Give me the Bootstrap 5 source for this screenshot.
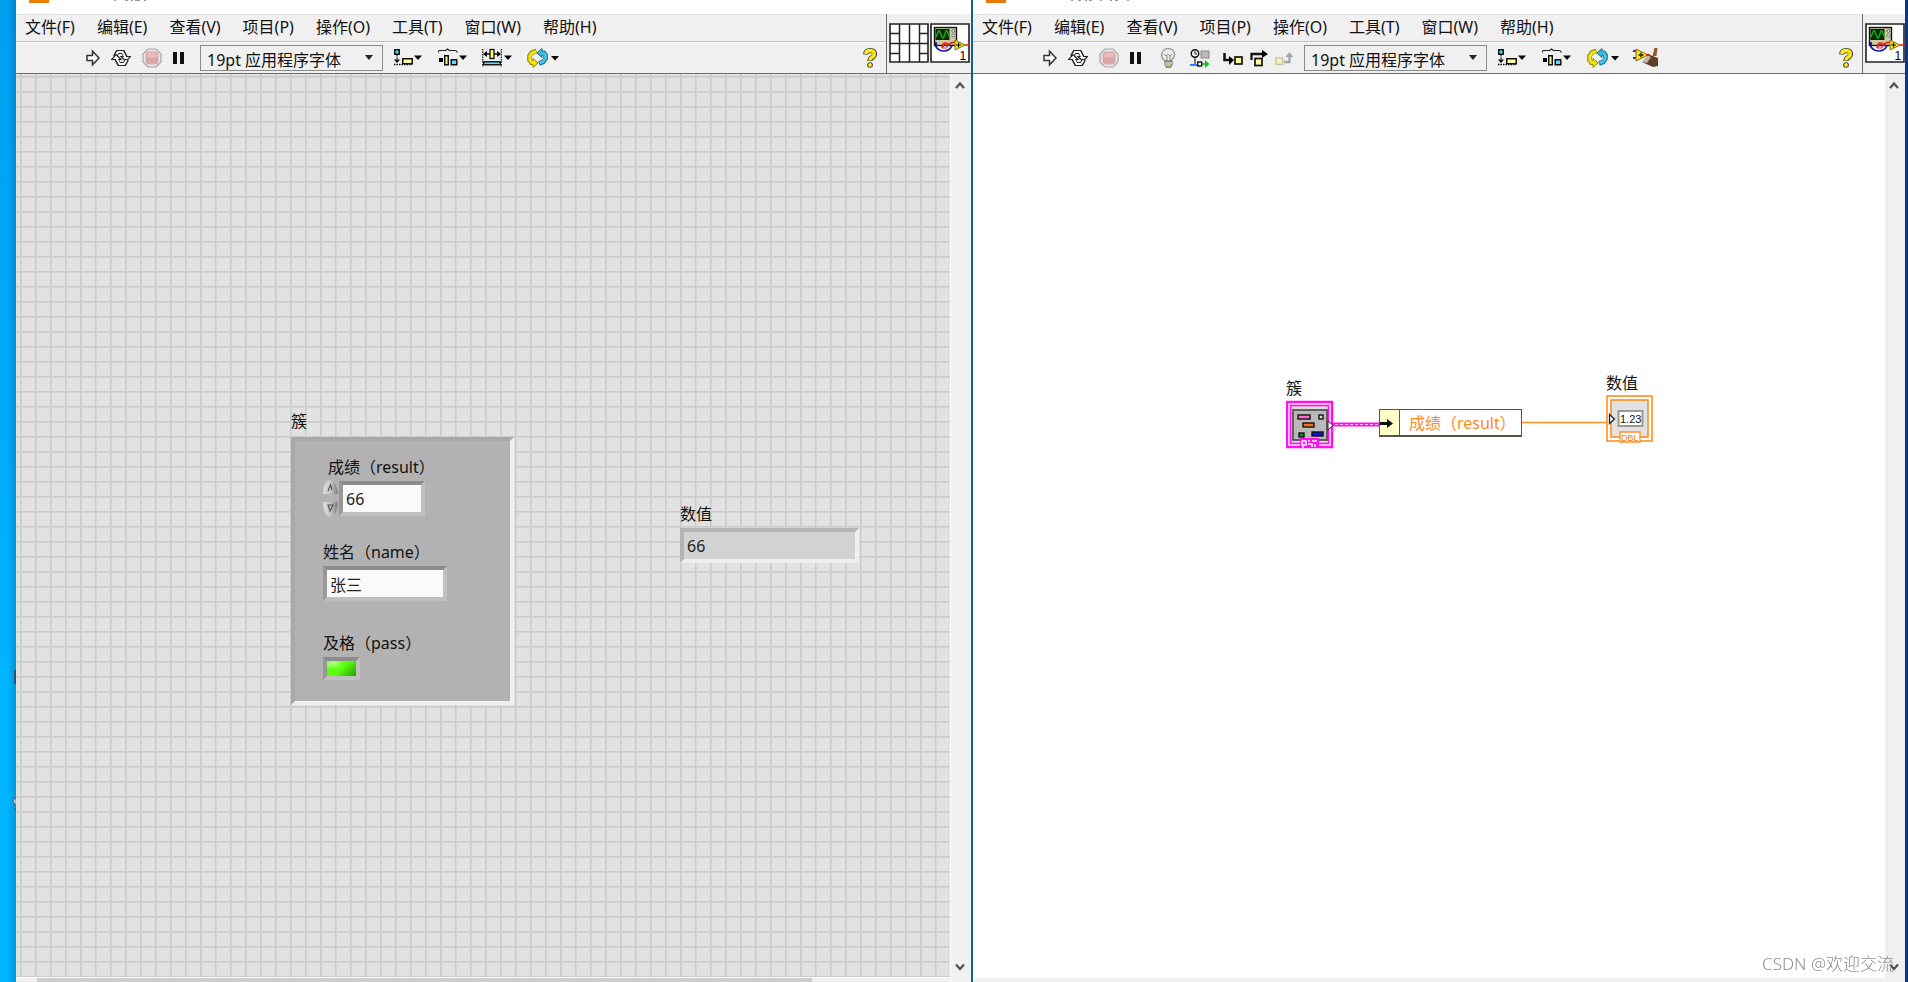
<!DOCTYPE html>
<html lang="zh-CN">
<head>
<meta charset="utf-8">
<meta name="viewport" content="width=device-width, initial-scale=1">
<title>簇 - 前面板与程序框图</title>
<link rel="stylesheet" href="https://cdn.jsdelivr.net/npm/bootstrap@5.3.0/dist/css/bootstrap.min.css">
<style>
  body { font-family: "Noto Sans", "Noto Sans CJK SC", sans-serif; font-size: 16px; line-height: 20px; color: #111; background: #fff; }
  .desktop { display: grid; grid-template-columns: 16px minmax(0, 957fr) minmax(0, 932fr) 3px; height: 100vh; }
  .wallpaper { background: linear-gradient(90deg, transparent 8px, rgba(0, 60, 100, .25)), linear-gradient(#009ff0, #00b4ff 70%); }
  .edge-left { border-right: 2px solid #0f6095; }
  .edge-right { background: #003a94; }
  .title-strip { height: 14px; padding-left: 13px; gap: 64px; background: #fff; }
  .chrome { background: #f0f0f0; border-bottom: 1px solid #6c6c6c; height: 60px; }
  .menu-bar { height: 28px; gap: 22px; padding-left: 9px; border-top: 1px solid #e0e0e0; border-bottom: 1px solid #bdbdbd; }
  .menu-bar a { color: #111; text-decoration: none; white-space: nowrap; line-height: 24px; }
  .tool-bar { height: 31px; gap: 11px; padding: 0 9px 0 70px; border-top: 1px solid #fff; }
  .tool-bar button, .palette button, .scroll-y button { border: 0; padding: 0; background: none; display: block; line-height: 0; }
  .steps { gap: 7px; }
  .font-box select { width: 183px; height: 26px; padding: 3px 24px 0 6px; border: 1px solid #8a8a8a; border-radius: 0; background: #f0f0f0; color: #111; font-size: 16px; line-height: 22px; appearance: none; }
  .font-box svg { position: absolute; right: 10px; top: 10px; pointer-events: none; }
  .palette { gap: 1px; padding: 9px 1px 0 2px; border-left: 1px solid #6c6c6c; }
  .palette-single { padding-right: 0; }
  .scroll-y { width: 21px; background: #f0f0f0; border-left: 1px solid #fff; padding: 6px 0 10px; }
  .scroll-x { height: 5px; background: #f0f0f0; border-top: 1px solid #fff; }
  .scroll-x div { height: 4px; margin-left: 21px; width: 83%; background: #cdcdcd; }
  .panel { background-color: #e2e2e2; overflow: hidden;
    background-image: linear-gradient(90deg, #cacaca 1px, #d4d4d4 1px 2px, transparent 2px), linear-gradient(#cacaca 1px, #d4d4d4 1px 2px, transparent 2px);
    background-size: 15px 15px; background-position: 4px 2px; }
  .diagram { background: #fff; overflow: hidden; }
  .item { position: absolute; }
  .item-label { display: block; white-space: nowrap; line-height: 20px; }
  .bevel { border: 4px solid; border-color: #8c8c8c #c0c0c0 #c0c0c0 #989898; }
  .bevel-pale { border: 4px solid; border-color: #b3b3b3 #efefef #efefef #b3b3b3; }
  .field { display: block; height: 35px; padding: 0 3px; border-radius: 0; background: #fafafa; color: #222; line-height: 24px; }
  .cluster-box { width: 223px; height: 268px; margin-top: 6px; padding: 16px 0 0 28px; background: #b2b2b2; border-color: #a8a8a8 #efefef #efefef #a8a8a8; }
  .score-label { margin-left: 5px; }
  .score-row { gap: 1px; margin: 2px 0 24px; }
  .pass-label { margin-top: 32px; }
  .field-score { width: 86px; }
  .field-name { width: 124px; }
  .field-value { width: 179px; background: #d2d2d2; }
  .led { display: block; width: 37px; height: 23px; padding: 0; background: radial-gradient(ellipse at 20% 15%, #b8ff90, transparent 35%), linear-gradient(135deg, #5cff10 50%, #2b9a00); }
  .wm { position: fixed; right: 14px; bottom: 8px; font-size: 17px; font-weight: 300; color: #8f8f8f; }
  .unbundle { display: flex; height: 28px; border: 1px solid #55554a; border-bottom-width: 2px; background: #fff; }
  .unbundle span { padding-left: 9px; width: 121px; color: #ff8a1c; line-height: 26px; white-space: nowrap; }
  .unbundle svg { background: #ffffcc; border-right: 1px solid #55554a; }
  svg text { font-family: "Liberation Sans", sans-serif; }
</style>
</head>
<body class="overflow-hidden">

<svg width="0" height="0" class="position-absolute" aria-hidden="true">
  <defs>
    <symbol id="i-run" viewBox="0 0 14 20"><path d="M1 7.500h5.500V3.200L13 10l-6.500 6.800v-4.300H1z" fill="#fff" stroke="#333" stroke-width="1.500"/></symbol>
    <symbol id="i-loop" viewBox="0 0 20 20">
      <g id="half-loop"><path d="M4 8.500L6.500 4H12l2.500 5" fill="none" stroke="#222" stroke-width="4.200"/><path d="M10 8.500h9.500L15 13.500z" fill="#fff" stroke="#222" stroke-width="1.200"/><path d="M4.500 7.800L7 4h4.500l2.800 5.200" fill="none" stroke="#fff" stroke-width="2"/></g>
      <use href="#half-loop" transform="rotate(180 10 10)"/>
    </symbol>
    <symbol id="i-stop" viewBox="0 0 20 20"><path d="M6 1h8l5 5v8l-5 5H6l-5-5V6z" fill="#e8e6e6" stroke="#a5a5a5" stroke-width="1.200"/><rect x="3.500" y="3.500" width="13" height="13" rx="4" fill="#d9a5a5"/><rect x="5" y="4.500" width="10" height="5" rx="2.500" fill="#e8bcbc"/></symbol>
    <symbol id="i-pause" viewBox="0 0 12 20"><path d="M0 4h4v12H0zM7 4h4v12H7z" fill="#111"/></symbol>
    <symbol id="i-align" viewBox="0 0 33 20"><rect x=".75" y="1.750" width="4.500" height="4.500" fill="#60d8ff" stroke="#111" stroke-width="1.500"/><path d="M3 7v6M0 16.500h18" stroke="#111" stroke-width="1.300" fill="none" stroke-dasharray="1.500 1"/><path d="M0 11.500h6L3 15z"/><rect x="8.750" y="10.750" width="9.500" height="5" fill="#ffffa0" stroke="#111" stroke-width="1.500"/><path d="M20 7.500h8l-4 4.500z"/></symbol>
    <symbol id="i-dist" viewBox="0 0 33 20"><path d="M0 4.500q0-2 2-2h5.500l2-1.500 2 1.500H17q2 0 2 2" fill="none" stroke="#222" stroke-width="1.200"/><path d="M1 10h4v4H1z"/><rect x="6.750" y="7.750" width="3.500" height="9" fill="#ffffa0" stroke="#111" stroke-width="1.500"/><rect x="13.250" y="11.750" width="5.500" height="5" fill="#60d8ff" stroke="#111" stroke-width="1.500"/><path d="M21 7.500h8l-4 4.500z"/></symbol>
    <symbol id="i-resize" viewBox="0 0 33 20"><path d="M.75 1v18M19.300 1v18" stroke="#111" stroke-width="1.200" stroke-dasharray="1.500 1"/><path d="M2 6h6M12 6h6" stroke="#111" stroke-width="1.500"/><path d="M1 6l4-3v6zM19 6l-4-3v6z"/><rect x="8" y="1.500" width="4" height="9" fill="#ffff70" stroke="#111" stroke-width="1.300"/><rect x="1.750" y="13.750" width="16.500" height="3" fill="#60d8ff" stroke="#111" stroke-width="1.400"/><path d="M22 7.500h8l-4 4.500z"/></symbol>
    <symbol id="i-order" viewBox="0 0 33 20">
      <path d="M10.500 3L6 4.500 3.500 8v4L6 14.500" fill="none" stroke="#8f8700" stroke-width="4.600"/><path d="M7 10.500l5 4.500-5 4.500v-3H4V13h3z" fill="#f4e30c" stroke="#8f8700"/><path d="M10 3.300L6.200 4.800 3.800 8v4l2.400 2.500" fill="none" stroke="#f4e30c" stroke-width="3"/>
      <path d="M13 15.500l4-1.500 2.500-3.500V7L17 4.500" fill="none" stroke="#14718d" stroke-width="4.600"/><path d="M16 .5L11 5l5 4.500v-3h3V3h-3z" fill="#38b8dc" stroke="#14718d"/><path d="M13.500 15.200l3.300-1.400 2.400-3.300V7l-2.400-2.300" fill="none" stroke="#45c4e6" stroke-width="3"/>
      <path d="M25 8h8l-4 4.500z"/>
    </symbol>
    <symbol id="i-bulb" viewBox="0 0 24 20"><path d="M11.500 12.500q-4-3-2.500-7.500Q11 .4 15 .4q5.500.3 6.500 5.400.2 3.500-3.500 6.700v2h-5z" fill="#eee" stroke="#999" stroke-width="1.300"/><path d="M11 6l2 2 2-2 2 2 2-2M14 8v6M17 8v6" fill="none" stroke="#888"/><path d="M12 13h7v4l-2 3h-3l-2-3z" fill="#b5a565" stroke="#666"/><path d="M12 15h7M12 17h6" stroke="#ddd"/></symbol>
    <symbol id="i-retain" viewBox="0 0 22 20"><circle cx="7" cy="5.500" r="3.700" fill="#fff" stroke="#111" stroke-width="1.500"/><path d="M7 3v3h2M7 9v7" fill="none" stroke="#111"/><rect x="13" y="3" width="8" height="7" fill="#bbb" stroke="#888"/><path d="M2 17h8" stroke="#0050ff" stroke-width="1.500"/><rect x="9.700" y="14" width="4" height="4" fill="#fff" stroke="#111" stroke-width="1.400"/><path d="M14 16h4" stroke="#0a0" stroke-width="1.500"/><path d="M17 12l4.500 4-4.500 4z" fill="#10c010"/></symbol>
    <symbol id="i-into" viewBox="0 0 22 20"><path d="M3.500 5v7H9" fill="none" stroke="#111" stroke-width="2.500"/><path d="M8 8l5 4-5 5z"/><rect x="14" y="9" width="7" height="7" fill="#ffffa0" stroke="#111" stroke-width="1.700"/></symbol>
    <symbol id="i-over" viewBox="0 0 18 20"><path d="M1.500 12V6H13" fill="none" stroke="#111" stroke-width="2.300"/><path d="M12 2l6 4-6 4z"/><rect x="5" y="10.500" width="7" height="7" fill="#ffffa0" stroke="#111" stroke-width="1.700"/></symbol>
    <symbol id="i-out" viewBox="0 0 18 20"><rect x="1" y="10" width="6.500" height="6.500" fill="#f5f5bd" stroke="#c6c6a0" stroke-width="1.500"/><path d="M9 14h5.500V7" fill="none" stroke="#a5a5a5" stroke-width="2.300"/><path d="M10.500 9l4-5 4 5z" fill="#a5a5a5"/></symbol>
    <symbol id="i-clean" viewBox="0 0 30 20"><path d="M3 3h4M3 10h4" stroke="#2030d0" stroke-width="1.800"/><path d="M6 1l12 6-12 6z" fill="#f7e71c" stroke="#8a6b00"/><path d="M8.500 7h5M11 4.500v5" stroke="#222" stroke-width="1.300"/><path d="M16 7h4" stroke="#e02010" stroke-width="2"/><path d="M24.500 0h3l-1 8h-4z" fill="#8e5b25"/><path d="M20 7l8 3v8l-5 1-11-5 6-3z" fill="#5d3f2a"/><path d="M12 14l5-6 4 1-4 6z" fill="#c3b49e"/></symbol>
    <symbol id="i-help" viewBox="0 0 14 20"><path d="M2.500 6.500Q3 2.500 7 2.500q4.500.2 4.500 3.500 0 2-2.500 3.500-2 1-2 3.500" fill="none" stroke="#333" stroke-width="5"/><circle cx="7" cy="17" r="2.800" fill="#333"/><path d="M2.700 6Q3 2.500 7 2.500q4.300.2 4.300 3.500 0 2-2.300 3.300-2 1.200-2 3.200" fill="none" stroke="#ffee10" stroke-width="3.400"/><circle cx="7" cy="17" r="1.900" fill="#ffee10"/></symbol>
    <symbol id="i-pane" viewBox="0 0 40 40"><path d="M1 1h38v38H1z" fill="#fff" stroke="#222" stroke-width="1.600"/><path d="M10.500 1v38M20.500 1v38M30.500 1v38M1 20.500h38M1 10.500h9.500M1 30.500h9.500M30.500 10.500H39M30.500 30.500H39" stroke="#222" stroke-width="1.500"/></symbol>
    <symbol id="i-vi" viewBox="0 0 40 40"><path d="M1 1h38v38H1z" fill="#fff" stroke="#222" stroke-width="1.600"/><rect x="4.500" y="4.500" width="22" height="18" fill="#cfcaa2" stroke="#111" stroke-width="1.400"/><rect x="5.500" y="6" width="14" height="11" fill="#052a08"/><path d="M6 14l2.500-6h1l3 7h1L16 8h1l2.500 6" fill="none" stroke="#18b018" stroke-width="1.400"/><circle cx="23.300" cy="8" r="1.400" fill="#fff" stroke="#666"/><circle cx="23.300" cy="12.500" r="1.400" fill="#fff" stroke="#666"/><path d="M6 19v5q3 4 8 4t8-5" fill="none" stroke="#1818a8" stroke-width="1.600"/><path d="M6 20v4" stroke="#1818a8" stroke-width="2"/><path d="M12 25l3-5 3 2q3-3 8-3h1M35 22h5" fill="none" stroke="#e82020" stroke-width="1.500"/><path d="M13 20h5l-1 5h-5z" fill="none" stroke="#e82020"/><path d="M25 17l10 5-10 5z" fill="#ffe820" stroke="#857400"/><path d="M26 22h5M28.500 19.500v5" stroke="#111" stroke-width="1.200"/><text x="29.500" y="36.500" font-size="12">1</text></symbol>
    <symbol id="i-up" viewBox="0 0 20 20"><path d="M5 13l4-4.500 4 4.500" fill="none" stroke="#555" stroke-width="2.400"/></symbol>
    <symbol id="i-down" viewBox="0 0 20 20"><path d="M5 7.500l4 4.500 4-4.500" fill="none" stroke="#555" stroke-width="2.400"/></symbol>
  </defs>
</svg>

<div class="desktop">
  <div class="wallpaper position-relative">
    <svg class="position-absolute end-0" style="top:68.200%" width="4" height="142" aria-hidden="true"><path d="M2 0h2v14H2z" fill="#165a80"/><path d="M3 128q-3 3 0 7h1v-7zM2 139h2" fill="#fff" stroke="#456" stroke-width="1"/></svg>
  </div>

  <!-- 前面板 -->
  <section class="edge-left d-flex flex-column">
    <div class="title-strip d-flex">
      <svg width="20" height="3" aria-hidden="true"><path d="M0 0h20v3H0z" fill="#ec7a08"/></svg>
      <svg width="36" height="2" aria-hidden="true"><path d="M1 .5h2M12 .5h3M18 .5h2M22 .5h5M31 .5h2" stroke="#999"/></svg>
    </div>
    <header class="chrome d-flex">
      <div class="flex-grow-1">
        <nav class="menu-bar d-flex"><a href="#">文件(F)</a><a href="#">编辑(E)</a><a href="#">查看(V)</a><a href="#">项目(P)</a><a href="#">操作(O)</a><a href="#">工具(T)</a><a href="#">窗口(W)</a><a href="#">帮助(H)</a></nav>
        <div class="tool-bar d-flex align-items-center">
          <button type="button" aria-label="运行"><svg width="14" height="20"><use href="#i-run"/></svg></button>
          <button type="button" aria-label="连续运行"><svg width="20" height="20"><use href="#i-loop"/></svg></button>
          <button type="button" aria-label="中止"><svg width="20" height="20"><use href="#i-stop"/></svg></button>
          <button type="button" aria-label="暂停"><svg width="12" height="20"><use href="#i-pause"/></svg></button>
          <div class="font-box position-relative ms-1"><select aria-label="字体"><option>19pt 应用程序字体</option></select><svg width="8" height="5" aria-hidden="true"><path d="M0 0h8L4 5z" fill="#222"/></svg></div>
          <button type="button" aria-label="对齐对象"><svg width="33" height="20"><use href="#i-align"/></svg></button>
          <button type="button" aria-label="分布对象"><svg width="33" height="20"><use href="#i-dist"/></svg></button>
          <button type="button" aria-label="调整大小"><svg width="33" height="20"><use href="#i-resize"/></svg></button>
          <button type="button" aria-label="重新排序"><svg width="33" height="20"><use href="#i-order"/></svg></button>
          <button type="button" class="ms-auto" aria-label="即时帮助"><svg width="14" height="20"><use href="#i-help"/></svg></button>
        </div>
      </div>
      <div class="palette d-flex align-items-start">
        <button type="button" aria-label="连线板"><svg width="40" height="40"><use href="#i-pane"/></svg></button>
        <button type="button" aria-label="VI 图标"><svg width="40" height="40"><use href="#i-vi"/></svg></button>
      </div>
    </header>
    <div class="flex-grow-1 d-flex">
      <div class="flex-grow-1 d-flex flex-column">
        <main class="panel flex-grow-1 position-relative">
          <div class="item" style="left:275px;top:337px">
            <span class="item-label">簇</span>
            <div class="cluster-box bevel-pale">
              <label class="item-label score-label" for="score">成绩（result）</label>
              <div class="score-row d-flex align-items-center">
                <svg width="15" height="39" role="img" aria-label="增减">
                  <defs><linearGradient id="knob"><stop offset="0" stop-color="#e4e4e4"/><stop offset=".6" stop-color="#bbb"/><stop offset="1" stop-color="#777"/></linearGradient></defs>
                  <path d="M0 15Q1 1 7 1t8 14z" fill="url(#knob)"/><path d="M0 23h15q-1 14-8 15Q1 37 0 23z" fill="url(#knob)"/>
                  <path d="M5 12l2.500-6L9 11M5 26h5l-3 6z" fill="none" stroke="#555" stroke-width="1.200"/>
                </svg>
                <input class="field field-score bevel" id="score" type="text" value="66">
              </div>
              <label class="item-label" for="pname">姓名（name）</label>
              <input class="field field-name bevel mt-1" id="pname" type="text" value="张三">
              <label class="item-label pass-label" for="pass">及格（pass）</label>
              <button class="led bevel mt-1" id="pass" type="button"></button>
            </div>
          </div>
          <div class="item" style="left:664px;top:430px">
            <label class="item-label" for="val">数值</label>
            <input class="field field-value bevel-pale mt-1" id="val" type="text" value="66" readonly>
          </div>
        </main>
        <div class="scroll-x"><div></div></div>
      </div>
      <div class="scroll-y d-flex flex-column justify-content-between">
        <button type="button" aria-label="向上滚动"><svg width="20" height="10" viewBox="0 5 20 10"><use href="#i-up" width="20" height="20"/></svg></button>
        <button type="button" aria-label="向下滚动"><svg width="20" height="10" viewBox="0 5 20 10"><use href="#i-down" width="20" height="20"/></svg></button>
      </div>
    </div>
  </section>

  <!-- 程序框图 -->
  <section class="d-flex flex-column">
    <div class="title-strip d-flex">
      <svg width="20" height="3" aria-hidden="true"><path d="M0 0h20v3H0z" fill="#ec7a08"/></svg>
      <svg width="60" height="2" aria-hidden="true"><path d="M1 .5h2M8 .5h3M15 .5h2M19 .5h3M30 .5h2M40 .5h2M45 .5h3M57 .5h2" stroke="#999"/></svg>
    </div>
    <header class="chrome d-flex">
      <div class="flex-grow-1">
        <nav class="menu-bar d-flex"><a href="#">文件(F)</a><a href="#">编辑(E)</a><a href="#">查看(V)</a><a href="#">项目(P)</a><a href="#">操作(O)</a><a href="#">工具(T)</a><a href="#">窗口(W)</a><a href="#">帮助(H)</a></nav>
        <div class="tool-bar d-flex align-items-center">
          <button type="button" aria-label="运行"><svg width="14" height="20"><use href="#i-run"/></svg></button>
          <button type="button" aria-label="连续运行"><svg width="20" height="20"><use href="#i-loop"/></svg></button>
          <button type="button" aria-label="中止"><svg width="20" height="20"><use href="#i-stop"/></svg></button>
          <button type="button" aria-label="暂停"><svg width="12" height="20"><use href="#i-pause"/></svg></button>
          <button type="button" aria-label="高亮执行"><svg width="24" height="20"><use href="#i-bulb"/></svg></button>
          <button type="button" aria-label="保存连线值"><svg width="22" height="20"><use href="#i-retain"/></svg></button>
          <div class="steps d-flex">
            <button type="button" aria-label="单步步入"><svg width="22" height="20"><use href="#i-into"/></svg></button>
            <button type="button" aria-label="单步步过"><svg width="18" height="20"><use href="#i-over"/></svg></button>
            <button type="button" aria-label="单步步出"><svg width="18" height="20"><use href="#i-out"/></svg></button>
          </div>
          <div class="font-box position-relative"><select aria-label="字体"><option>19pt 应用程序字体</option></select><svg width="8" height="5" aria-hidden="true"><path d="M0 0h8L4 5z" fill="#222"/></svg></div>
          <button type="button" aria-label="对齐对象"><svg width="33" height="20"><use href="#i-align"/></svg></button>
          <button type="button" aria-label="分布对象"><svg width="33" height="20"><use href="#i-dist"/></svg></button>
          <button type="button" aria-label="重新排序"><svg width="33" height="20"><use href="#i-order"/></svg></button>
          <button type="button" aria-label="整理程序框图"><svg width="30" height="20"><use href="#i-clean"/></svg></button>
          <button type="button" class="ms-auto" aria-label="即时帮助"><svg width="14" height="20"><use href="#i-help"/></svg></button>
        </div>
      </div>
      <div class="palette palette-single d-flex align-items-start">
        <button type="button" aria-label="VI 图标"><svg width="40" height="40"><use href="#i-vi"/></svg></button>
      </div>
    </header>
    <div class="flex-grow-1 d-flex">
      <div class="flex-grow-1 d-flex flex-column">
        <main class="diagram flex-grow-1 position-relative">
          <svg class="item" style="left:360px;top:342px" width="276" height="14" aria-hidden="true"><path d="M0 8.500h48" stroke="#ff10f0" stroke-width="4"/><path d="M2 8.500h46" stroke="#ffc8fa" stroke-width="1" stroke-dasharray="3 2"/><path d="M188 6.500h88" stroke="#ff9020" stroke-width="1.400"/></svg>
          <div class="item" style="left:313px;top:304px">
            <span class="item-label">簇</span>
            <svg class="d-block" width="48" height="52" viewBox="0 -2 48 50" role="img" aria-label="簇接线端">
              <rect x="1" y="1" width="45" height="45" fill="#fff" stroke="#ff10f0" stroke-width="2.500"/><rect x="4.500" y="4.500" width="38" height="38" fill="#ddd" stroke="#ff10f0" stroke-width="1.700"/>
              <rect x="7" y="9" width="34" height="30" fill="#b9b9b9" stroke="#555" stroke-width="1.800"/>
              <g stroke="#111" stroke-width="1.400"><rect x="12" y="14" width="12" height="4" fill="#ff70c8"/><rect x="33" y="14" width="4" height="4" fill="#ddd"/><rect x="17" y="22" width="11" height="4" fill="#ff6a20"/><rect x="13" y="32" width="5" height="4" fill="#08a010"/><rect x="26" y="31" width="11" height="4" fill="#1010e8"/></g>
              <path d="M42 20v9l5-4.500z" fill="#fff" stroke="#222"/><path d="M14 37h19v10H14z" fill="#ff10f0"/><path d="M16 40h4v4h-4zM22 40h2M26 40h5M22 43h4v3M29 43v3M16 46h2" fill="none" stroke="#fff" stroke-width="1.500"/>
            </svg>
          </div>
          <div class="item unbundle" style="left:406px;top:335px">
            <svg width="20" height="25" aria-hidden="true"><path d="M0 13.500h10" stroke="#111" stroke-width="3"/><path d="M7 9l6 4.500L7 18z" fill="#111"/></svg>
            <span>成绩（result）</span>
          </div>
          <div class="item" style="left:633px;top:299px">
            <span class="item-label">数值</span>
            <svg class="d-block" width="48" height="51" viewBox="0 -2 48 51" role="img" aria-label="数值接线端">
              <rect x="1" y="1" width="45" height="45" fill="#fff" stroke="#ff9020" stroke-width="1.600"/><rect x="5" y="5" width="37" height="37" fill="#e2e2e2" stroke="#ff9020" stroke-width="1.600"/>
              <rect x="12.500" y="16" width="24" height="15" fill="#fff" stroke="#999" stroke-width="2"/><text x="14" y="28" font-size="11" fill="#111">1.23</text>
              <path d="M3.500 19.500v9l5-4.500z" fill="#fff" stroke="#222" stroke-width="1.300"/><path d="M14 37h20v10H14z" fill="#fff" stroke="#ff9020" stroke-width="1.300"/><text x="15" y="45.500" font-size="9" fill="#f08010">DBL</text>
            </svg>
          </div>
        </main>
        <div class="scroll-x"></div>
      </div>
      <div class="scroll-y d-flex flex-column justify-content-between">
        <button type="button" aria-label="向上滚动"><svg width="20" height="10" viewBox="0 5 20 10"><use href="#i-up" width="20" height="20"/></svg></button>
        <button type="button" aria-label="向下滚动"><svg width="20" height="10" viewBox="0 5 20 10"><use href="#i-down" width="20" height="20"/></svg></button>
      </div>
    </div>
  </section>
  <div class="edge-right"></div>
</div>
<div class="wm">CSDN @欢迎交流</div>

<script src="https://cdn.jsdelivr.net/npm/bootstrap@5.3.0/dist/js/bootstrap.bundle.min.js"></script>
</body>
</html>
